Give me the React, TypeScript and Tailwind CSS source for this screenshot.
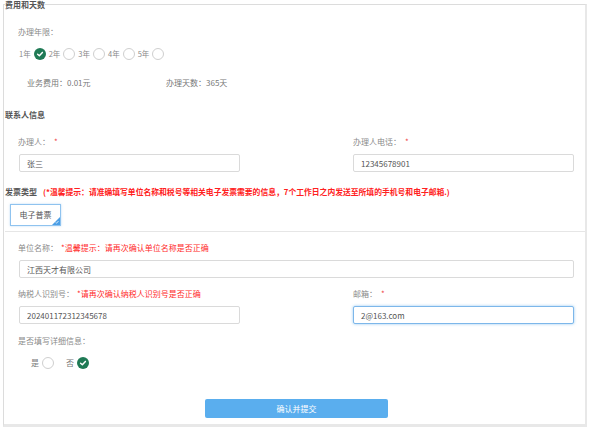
import React from "react";

const Check = () => (
  <span className="flex h-[12px] w-[12px] items-center justify-center rounded-full bg-[#1f7a55]">
    <svg width="8" height="8" viewBox="0 0 10 10">
      <path d="M2 5.2 L4.2 7.2 L8 3" fill="none" stroke="#fff" strokeWidth="1.8" strokeLinecap="round" strokeLinejoin="round" />
    </svg>
  </span>
);

const Empty = () => (
  <span className="block h-[12px] w-[12px] rounded-full border border-[#cfcfcf] bg-white" />
);

const Label = ({ text, star, hint }: { text: string; star?: boolean; hint?: string }) => (
  <div className="flex h-[12px] items-center text-[8px] leading-[12px] text-[#8a8a8a]">
    <span>{text}</span>
    {star && <span className="ml-[4px] text-[#ef4444]">*</span>}
    {hint && <span className="ml-[3px] text-[#ff2a2a]">{hint}</span>}
  </div>
);

const Field = ({ value, w, focus }: { value: string; w: string; focus?: boolean }) => (
  <input
    readOnly
    value={value}
    className={`mt-[6px] block h-[18px] ${w} rounded-[2px] border bg-white pl-[7px] text-[8px] text-[#555] outline-none ${
      focus ? "border-[#7db7ea] shadow-[0_0_3px_rgba(102,175,233,0.7)]" : "border-[#dadada]"
    }`}
  />
);

export default function App() {
  return (
    <div className="h-[427px] w-[590px] overflow-hidden bg-white font-['Noto_Sans_CJK_SC',sans-serif]">
      <fieldset className="ml-[3px] h-[427px] w-[584px] border-t border-l border-t-[#dcdcdc] border-l-[#dcdcdc] border-r-2 border-r-[#e8e8e8] border-b-[3px] border-b-[#e8e8e8]">
        <legend className="ml-[1px] text-[8px] leading-[9px] font-bold text-[#555]">费用和天数</legend>

        <div className="mt-[17px] pl-[14px]">
          <Label text="办理年限：" />
        </div>
        <div className="mt-[10px] flex h-[12px] items-center gap-[3px] pl-[15px] text-[7.5px] text-[#8a8a8a]">
          <span>1年</span>
          <Check />
          <span>2年</span>
          <Empty />
          <span>3年</span>
          <Empty />
          <span>4年</span>
          <Empty />
          <span>5年</span>
          <Empty />
        </div>
        <div className="mt-[17px] flex h-[12px] items-center pl-[23px] text-[8px] text-[#777]">
          <span className="w-[139px]">业务费用：0.01元</span>
          <span>办理天数：365天</span>
        </div>

        <div className="mt-[20px] pl-[1px] text-[8px] leading-[12px] font-bold text-[#555]">联系人信息</div>
        <div className="mt-[15px] flex gap-[113px] pl-[14px]">
          <div>
            <Label text="办理人：" star />
            <div className="pl-[1px]">
              <Field value="张三" w="w-[221px]" />
            </div>
          </div>
          <div>
            <Label text="办理人电话：" star />
            <Field value="12345678901" w="w-[221px]" />
          </div>
        </div>

        <div className="mt-[14px] flex h-[12px] items-center pl-[1px] text-[8px] leading-[12px]">
          <span className="font-bold text-[#555]">发票类型</span>
          <span className="ml-[6px] text-[7.8px] font-bold text-[#ff2020]">
            (*温馨提示：请准确填写单位名称和税号等相关电子发票需要的信息，7个工作日之内发送至所填的手机号和电子邮箱.)
          </span>
        </div>
        <div className="relative mt-[6px] ml-[6px] flex h-[22px] w-[51px] items-center justify-center border border-[#8fc3ef] bg-white text-[8px] text-[#555] shadow-[0_0_2px_rgba(120,180,235,0.5)]">
          电子普票
          <span className="absolute right-0 bottom-0 h-0 w-0 border-b-[8px] border-l-[8px] border-b-[#4a9ee6] border-l-transparent" />
          <svg className="absolute right-[1px] bottom-[1px]" width="4" height="4" viewBox="0 0 4 4">
            <path d="M0.5 2.2 L1.6 3.2 L3.5 1" fill="none" stroke="#fff" strokeWidth="0.7" />
          </svg>
        </div>
        <div className="mt-[5px] ml-[1px] h-px bg-[#e6e6e6]" />

        <div className="mt-[10px] pl-[14px]">
          <Label text="单位名称：" hint="*温馨提示：请再次确认单位名称是否正确" />
          <div className="pl-[1px]">
            <Field value="江西天才有限公司" w="w-[555px]" />
          </div>
        </div>

        <div className="mt-[10px] flex gap-[113px] pl-[14px]">
          <div>
            <Label text="纳税人识别号：" hint="*请再次确认纳税人识别号是否正确" />
            <div className="pl-[1px]">
              <Field value="202401172312345678" w="w-[221px]" />
            </div>
          </div>
          <div>
            <Label text="邮箱：" star />
            <Field value="2@163.com" w="w-[221px]" focus />
          </div>
        </div>

        <div className="mt-[11px] pl-[14px]">
          <Label text="是否填写详细信息：" />
        </div>
        <div className="mt-[10px] flex h-[12px] items-center pl-[27px] text-[8px] text-[#777]">
          <span>是</span>
          <span className="ml-[3px]"><Empty /></span>
          <span className="ml-[12px]">否</span>
          <span className="ml-[3px]"><Check /></span>
        </div>

        <button className="mt-[30px] ml-[201px] flex h-[19px] w-[183px] items-center justify-center rounded-[2px] bg-[#5aaeee] text-[8px] text-white">
          确认并提交
        </button>
      </fieldset>
    </div>
  );
}
